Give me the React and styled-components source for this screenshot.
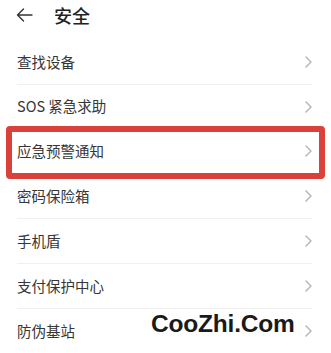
import React from 'react';
import styled, { createGlobalStyle } from 'styled-components';

const GlobalStyle = createGlobalStyle`
  html, body {
    margin: 0;
    padding: 0;
    background: #fff;
  }
  body {
    font-family: "Noto Sans CJK SC", "Noto Sans", sans-serif;
    overflow: hidden;
  }
`;

const Page = styled.div`
  position: relative;
  width: 331px;
  height: 353px;
  overflow: hidden;
  background: #fff;
`;

const Header = styled.div`
  display: flex;
  align-items: center;
  height: 30px;
  padding-left: 16px;
  gap: 21px;
`;

const Title = styled.span`
  font-size: 18px;
  font-weight: 500;
  color: #222;
  line-height: 1;
`;

const List = styled.div`
  display: flex;
  flex-direction: column;
  margin-top: 10px;
`;

const Row = styled.div`
  position: relative;
  display: flex;
  align-items: center;
  justify-content: space-between;
  height: 44.8px;
  margin: 0 19px 0 17px;
  border-bottom: 1px solid #f0f0f0;
  box-sizing: border-box;

  &:last-child {
    border-bottom: none;
  }

  ${p => p.$highlight && `
    &::after {
      content: "";
      position: absolute;
      top: -4px;
      bottom: -6px;
      left: -11px;
      right: -13px;
      border: 6.5px solid #d9413a;
      border-radius: 4px;
    }
  `}
`;

const Label = styled.span`
  font-size: 14.5px;
  color: #363636;
  line-height: 1;
`;

const Watermark = styled.div`
  position: absolute;
  left: 151px;
  top: 310px;
  font-family: "Liberation Sans", Arial, sans-serif;
  font-weight: 700;
  font-size: 24.5px;
  color: #1a1a1a;
  letter-spacing: -0.2px;
`;

const BackArrow = () => (
  <svg width="17" height="14" viewBox="0 0 17 14" fill="none">
    <path d="M16 7H1.5M7.5 1L1.5 7l6 6" stroke="#333" strokeWidth="1.4" strokeLinecap="round" strokeLinejoin="round" />
  </svg>
);

const Chevron = () => (
  <svg width="7" height="12" viewBox="0 0 7 12" fill="none">
    <path d="M1 1l5 5-5 5" stroke="#b3b3b3" strokeWidth="1.4" strokeLinecap="round" strokeLinejoin="round" />
  </svg>
);

const items = [
  '查找设备',
  'SOS 紧急求助',
  '应急预警通知',
  '密码保险箱',
  '手机盾',
  '支付保护中心',
  '防伪基站',
];

export default function App() {
  return (
    <Page>
      <GlobalStyle />
      <Header>
        <BackArrow />
        <Title>安全</Title>
      </Header>
      <List>
        {items.map(label => (
          <Row key={label} $highlight={label === '应急预警通知'}>
            <Label>{label}</Label>
            <Chevron />
          </Row>
        ))}
      </List>
      <Watermark>CooZhi.Com</Watermark>
    </Page>
  );
}
